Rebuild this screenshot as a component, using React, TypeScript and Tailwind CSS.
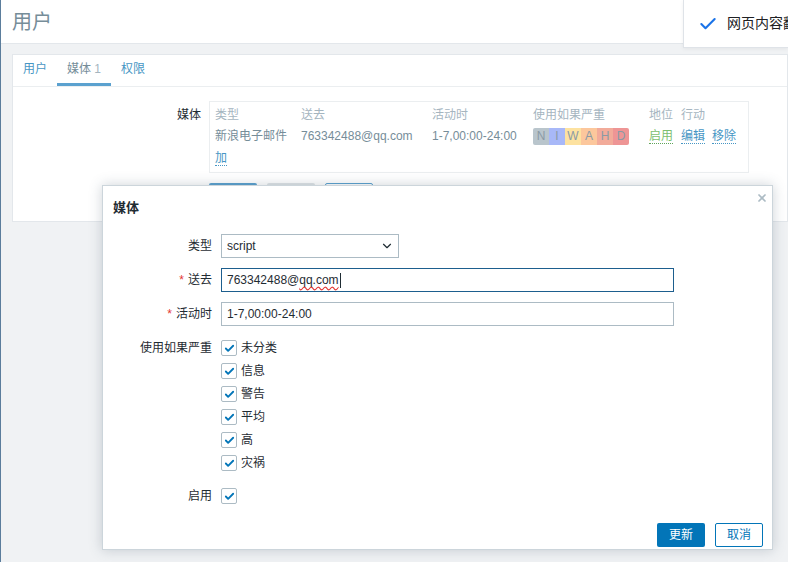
import { Check, ChevronDown, X } from "lucide-react";

const font = { fontFamily: '"Liberation Sans", "Noto Sans CJK SC", sans-serif' };

const sev = [
  { k: "N", c: "bg-[#b9c5cc]" },
  { k: "I", c: "bg-[#a8b8f8]" },
  { k: "W", c: "bg-[#fde2a0]" },
  { k: "A", c: "bg-[#fcc79c]" },
  { k: "H", c: "bg-[#f2ab9a]" },
  { k: "D", c: "bg-[#ee9595]" },
];

const levels = ["未分类", "信息", "警告", "平均", "高", "灾祸"];

function Box() {
  return (
    <span className="flex h-[16px] w-[16px] items-center justify-center rounded-[2px] border border-[#acbbc4] bg-white">
      <Check className="h-[11px] w-[11px] text-[#0275b8]" strokeWidth={4} />
    </span>
  );
}

function Row({ label, req, children }: { label: string; req?: boolean; children: React.ReactNode }) {
  return (
    <div className="flex items-center">
      <div className="w-[109px] shrink-0 text-right text-[#1f2c33]">
        {req && <span className="mr-[4px] text-[#e33734]">*</span>}
        {label}
      </div>
      <div className="ml-[9px]">{children}</div>
    </div>
  );
}

export default function App() {
  return (
    <div
      className="relative h-[562px] w-[788px] overflow-hidden border-l border-[#5b7d9c] bg-[#f0f2f4] text-[12px]"
      style={font}
    >
      <header className="flex h-[44px] items-center border-b border-[#e3e7eb] bg-white px-[11px]">
        <h1 className="text-[20px] text-[#768d99]">用户</h1>
      </header>

      <div className="ml-[11px] mt-[10px] h-[168px] border border-[#e3e7eb] bg-white">
        <div className="flex h-[32px] items-end border-b border-[#ebeef0]">
          <span className="px-[10px] pb-[8px] text-[#4796c4]">用户</span>
          <span className="border-b-[3px] border-[#5ba1cf] px-[10px] pb-[5px] text-[#768d99]">
            媒体 <span className="text-[#a5b5bf]">1</span>
          </span>
          <span className="px-[10px] pb-[8px] text-[#4796c4]">权限</span>
        </div>

        <div className="mt-[14px] flex">
          <div className="w-[188px] pt-[5px] text-right text-[#1f2c33]">媒体</div>
          <div className="ml-[8px] flex h-[72px] w-[540px] flex-col border border-[#ebeef0] px-[5px] pt-[3px]">
            <div className="flex h-[20px] items-center text-[#a5b5bf]">
              <span className="w-[86px]">类型</span>
              <span className="w-[131px]">送去</span>
              <span className="w-[101px]">活动时</span>
              <span className="w-[116px]">使用如果严重</span>
              <span className="w-[32px]">地位</span>
              <span>行动</span>
            </div>
            <div className="flex h-[22px] items-center text-[#768d99]">
              <span className="w-[86px]">新浪电子邮件</span>
              <span className="w-[131px]">763342488@qq.com</span>
              <span className="w-[101px]">1-7,00:00-24:00</span>
              <span className="flex w-[116px]">
                {sev.map((s, i) => (
                  <span
                    key={s.k}
                    className={`flex h-[17px] w-[16px] items-center justify-center text-[#8a9aa5] ${s.c} ${i === 0 ? "rounded-l-[2px]" : ""} ${i === 5 ? "rounded-r-[2px]" : ""}`}
                  >
                    {s.k}
                  </span>
                ))}
              </span>
              <span className="w-[24px] border-b border-dotted border-[#5fa35a] leading-[14px] text-[#7cbf70]">启用</span>
              <span className="ml-[8px] border-b border-dotted border-[#4796c4] leading-[14px] text-[#4796c4]">编辑</span>
              <span className="ml-[7px] border-b border-dotted border-[#4796c4] leading-[14px] text-[#4796c4]">移除</span>
            </div>
            <div className="flex h-[22px] items-center">
              <span className="border-b border-dotted border-[#4796c4] leading-[14px] text-[#4796c4]">加</span>
            </div>
          </div>
        </div>

        <div className="ml-[196px] mt-[10px] flex gap-[10px]">
          <span className="h-[24px] w-[48px] rounded-[2px] bg-[#5ba1cf]" />
          <span className="h-[24px] w-[48px] rounded-[2px] bg-[#dfe4e7]" />
          <span className="h-[24px] w-[48px] rounded-[2px] border border-[#5ba1cf] bg-white" />
        </div>
      </div>

      {/* browser toast */}
      <div className="absolute right-0 top-0 flex h-[48px] w-[105px] items-center overflow-hidden whitespace-nowrap border-b border-l border-[#dfe3e8] bg-white pl-[14px] shadow-[0_1px_4px_rgba(0,0,0,0.06)]">
        <Check className="h-[20px] w-[20px] shrink-0 text-[#1a73e8]" strokeWidth={2.5} />
        <span className="ml-[9px] text-[14px] text-[#202124]">网页内容翻译</span>
      </div>

      {/* modal */}
      <div className="absolute left-[101px] top-[185px] flex h-[365px] w-[671px] flex-col border border-[#ccd5db] bg-white shadow-[0_0_12px_rgba(60,80,100,0.25)]">
        <div className="flex h-[44px] items-center px-[10px] text-[13px] font-bold text-[#1f2c33]">媒体</div>
        <X className="absolute right-[4px] top-[6px] h-[12px] w-[12px] text-[#acbbc4]" strokeWidth={3.5} />

        <div className="mt-[4px] flex flex-col gap-[10px]">
          <Row label="类型">
            <div className="flex h-[24px] w-[178px] items-center justify-between border border-[#acbbc4] pl-[5px] pr-[4px] text-[#1f2c33]">
              script
              <ChevronDown className="h-[14px] w-[14px] text-[#1f2c33]" />
            </div>
          </Row>
          <Row label="送去" req>
            <div className="flex h-[24px] w-[453px] items-center border border-[#1d5e8e] px-[5px] text-[#1f2c33]">
              763342488@
              <span className="underline decoration-[#e33734] decoration-wavy underline-offset-2">qq.com</span>
              <span className="ml-[1px] h-[15px] w-px bg-[#1f2c33]" />
            </div>
          </Row>
          <Row label="活动时" req>
            <div className="flex h-[24px] w-[453px] items-center border border-[#acbbc4] px-[5px] text-[#1f2c33]">
              1-7,00:00-24:00
            </div>
          </Row>
        </div>

        <div className="mt-[14px] flex">
          <div className="w-[109px] shrink-0 text-right leading-[16px] text-[#1f2c33]">使用如果严重</div>
          <div className="ml-[9px] flex flex-col gap-[7px]">
            {levels.map((l) => (
              <div key={l} className="flex items-center gap-[4px] leading-[16px] text-[#1f2c33]">
                <Box />
                {l}
              </div>
            ))}
          </div>
        </div>

        <div className="mt-[17px] flex items-center">
          <div className="w-[109px] shrink-0 text-right leading-[16px] text-[#1f2c33]">启用</div>
          <div className="ml-[9px]">
            <Box />
          </div>
        </div>

        <div className="mt-auto mb-[2px] flex justify-end gap-[10px] pr-[9px]">
          <button className="h-[24px] w-[48px] rounded-[2px] bg-[#0275b8] text-white">更新</button>
          <button className="h-[24px] w-[48px] rounded-[2px] border border-[#0275b8] bg-white text-[#0275b8]">取消</button>
        </div>
      </div>
    </div>
  );
}
